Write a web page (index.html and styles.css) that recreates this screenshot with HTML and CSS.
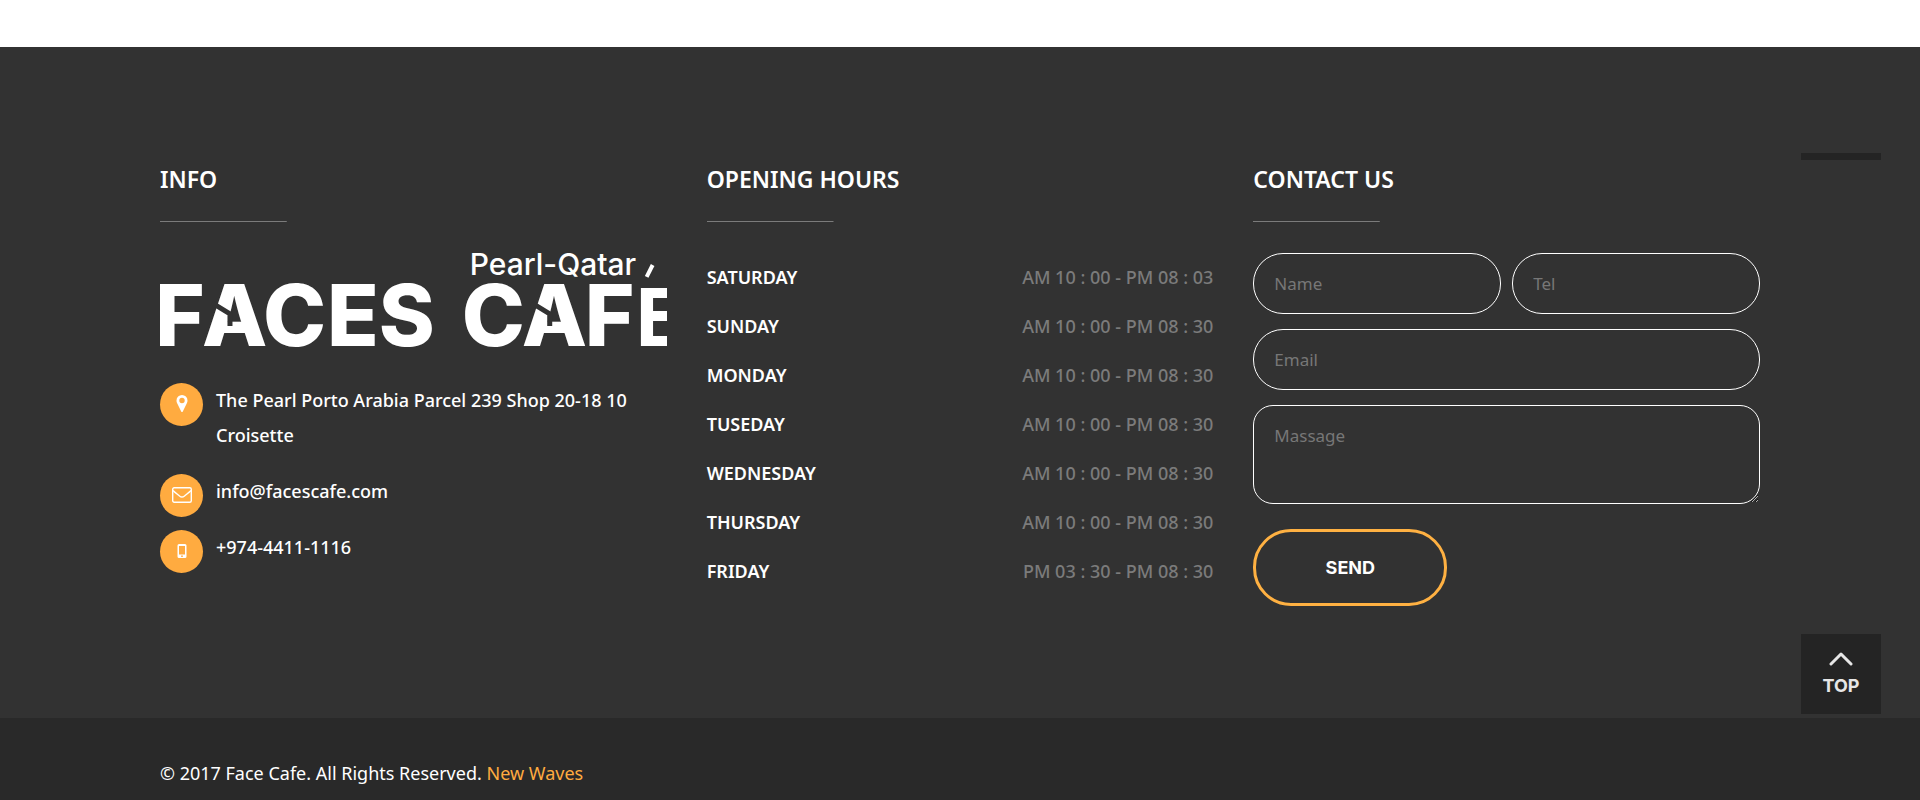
FILE: index.html
```html
<!DOCTYPE html>
<html lang="en">
<head>
  <meta charset="UTF-8">
  <meta name="viewport" content="width=device-width, initial-scale=1.0">
  <title>Faces Cafe</title>
  <link rel="stylesheet" href="styles.css">
</head>
<body>
  <footer class="footer">
    <div class="footer-main">
      <section class="column">
        <h2>INFO</h2>
        <svg class="logo" viewBox="0 0 507 96" role="img" aria-label="Faces Cafe Pearl-Qatar">
          <text class="logo-small" x="310" y="22">Pearl-Qatar</text>
          <path d="M493 12l-6 12" stroke="#fff" stroke-width="4"/>
          <text class="logo-big" x="-5 42 103 167 219" y="93">FACES</text>
          <text class="logo-big" x="302 362 425" y="93">CAF</text>
          <text class="logo-last" x="474" y="93">E</text>
          <path class="logo-cut" d="M52 50l18 11v12M372 50l18 11v12"/>
        </svg>
        <ul class="info">
          <li>
            <span class="icon">
              <svg width="12" height="18" viewBox="0 0 12 18"><path fill="#fff" fill-rule="evenodd" d="M6 0a5.500 5.500 0 0 0-5.500 5.500c0 1.500.4 2.200.9 3.200L5.200 16.500c.4.700 1.200.7 1.600 0l3.800-7.800c.5-1 .9-1.700.9-3.200A5.500 5.500 0 0 0 6 0zm0 2.800a2.700 2.700 0 1 1 0 5.400 2.700 2.700 0 0 1 0-5.400z"/></svg>
            </span>
            <p>The Pearl Porto Arabia Parcel 239 Shop 20-18 10 Croisette</p>
          </li>
          <li>
            <span class="icon">
              <svg width="20" height="16" viewBox="0 0 20 16" fill="none" stroke="#fff" stroke-width="1.400"><rect x=".7" y=".7" width="18.600" height="14.600" rx="1.500"/><path d="M1 3.500c2 2 4.500 3.800 6.500 5.500 1.800 1.500 3.200 1.500 5 0 2-1.700 4.500-3.500 6.500-5.500"/></svg>
            </span>
            <p>info@facescafe.com</p>
          </li>
          <li>
            <span class="icon">
              <svg width="10" height="14" viewBox="0 0 10 14"><path fill="#fff" fill-rule="evenodd" d="M2 0h6a1.500 1.500 0 0 1 1.500 1.500v11A1.500 1.500 0 0 1 8 14H2a1.500 1.500 0 0 1-1.500-1.500v-11A1.500 1.500 0 0 1 2 0zm0 2v8.500h6V2zm3 9.300a.9.9 0 1 0 0 1.800.9.9 0 0 0 0-1.800z"/></svg>
            </span>
            <p>+974-4411-1116</p>
          </li>
        </ul>
      </section>

      <section class="column">
        <h2>OPENING HOURS</h2>
        <table class="hours">
          <tr><th scope="row">SATURDAY</th><td>AM 10 : 00 - PM 08 : 03</td></tr>
          <tr><th scope="row">SUNDAY</th><td>AM 10 : 00 - PM 08 : 30</td></tr>
          <tr><th scope="row">MONDAY</th><td>AM 10 : 00 - PM 08 : 30</td></tr>
          <tr><th scope="row">TUSEDAY</th><td>AM 10 : 00 - PM 08 : 30</td></tr>
          <tr><th scope="row">WEDNESDAY</th><td>AM 10 : 00 - PM 08 : 30</td></tr>
          <tr><th scope="row">THURSDAY</th><td>AM 10 : 00 - PM 08 : 30</td></tr>
          <tr><th scope="row">FRIDAY</th><td>PM 03 : 30 - PM 08 : 30</td></tr>
        </table>
      </section>

      <section class="column">
        <h2>CONTACT US</h2>
        <form class="contact">
          <input type="text" name="name" placeholder="Name" aria-label="Name">
          <input type="tel" name="tel" placeholder="Tel" aria-label="Tel">
          <input class="wide" type="email" name="email" placeholder="Email" aria-label="Email">
          <textarea class="wide" name="message" placeholder="Massage" aria-label="Massage"></textarea>
          <button type="submit">SEND</button>
        </form>
      </section>
    </div>

    <div class="footer-bottom">
      <p>© 2017 Face Cafe. All Rights Reserved. <a href="#">New Waves</a></p>
    </div>
  </footer>

  <div class="side-bar"></div>
  <a class="to-top" href="#">
    <svg width="24" height="14" viewBox="0 0 24 14" fill="none" stroke="#e6e6e6" stroke-width="3" stroke-linecap="round" stroke-linejoin="round"><path d="M2 12L12 2l10 10"/></svg>
    TOP
  </a>
</body>
</html>
```

FILE: styles.css
```css
* { box-sizing: border-box; }
body { margin: 0; padding-top: 47px; background: #fff; color: #fff; font: 18px/35px "Noto Sans", sans-serif; }
h2, p, ul { margin: 0; padding: 0; }

.footer { background: #323232; }
.footer-main { display: grid; grid-template-columns: repeat(3, 1fr); gap: 40px; padding: 112px 160px; }

h2 { font-size: 23px; line-height: 40px; font-weight: 600; margin-bottom: 31px; padding-bottom: 23px; background: linear-gradient(#7b7b7b, #7b7b7b) left bottom / 25% 1px no-repeat; }

.logo { display: block; width: 100%; }
.logo text { fill: #fff; }
.logo-small { font: 500 30px Inter, sans-serif; }
.logo-big { font: 800 85px Inter, sans-serif; }
.logo-last { font: 700 80px "Open Sans", sans-serif; }
.logo-cut { fill: none; stroke: #323232; stroke-width: 5; }

.info { list-style: none; margin-top: 34px; font-weight: 500; }
.info li { display: flex; gap: 13px; margin-bottom: 13px; }
.info p { padding-bottom: 8px; }
.icon { flex: none; display: flex; align-items: center; justify-content: center; width: 43px; height: 43px; border-radius: 50%; background: #ffab40; }

.hours { width: 100%; border-collapse: collapse; line-height: 49px; font-weight: 500; }
.hours th { padding: 0; text-align: left; font-weight: 600; }
.hours td { padding: 0; text-align: right; color: #7b7b7b; }

.contact { display: grid; grid-template-columns: 1fr 1fr; gap: 15px 11px; }
.contact input, .contact textarea { width: 100%; height: 61px; padding: 0 20px; border: 1px solid #fff; border-radius: 30px; background: transparent; color: #fff; font: 17px "Noto Sans", sans-serif; }
.contact textarea { display: block; height: 99px; padding-top: 18px; border-radius: 20px; }
.contact ::placeholder { color: #777; opacity: 1; }
.contact .wide { grid-column: 1 / -1; }
.contact button { width: 194px; height: 77px; margin-top: 10px; border: 3px solid #ffb142; border-radius: 38px; background: transparent; color: #fff; font: 700 18px Inter, sans-serif; cursor: pointer; }

.footer-bottom { padding: 38px 160px 9px; background: #292929; }
.footer-bottom a { color: #ffab40; text-decoration: none; }

.side-bar { position: absolute; top: 153px; right: 39px; width: 80px; height: 7px; background: #242424; }
.to-top { position: fixed; right: 39px; bottom: 86px; width: 80px; height: 80px; display: flex; flex-direction: column; align-items: center; gap: 10px; padding-top: 18px; background: #242424; color: #e6e6e6; font: 700 18px/20px Inter, sans-serif; text-decoration: none; }
```
